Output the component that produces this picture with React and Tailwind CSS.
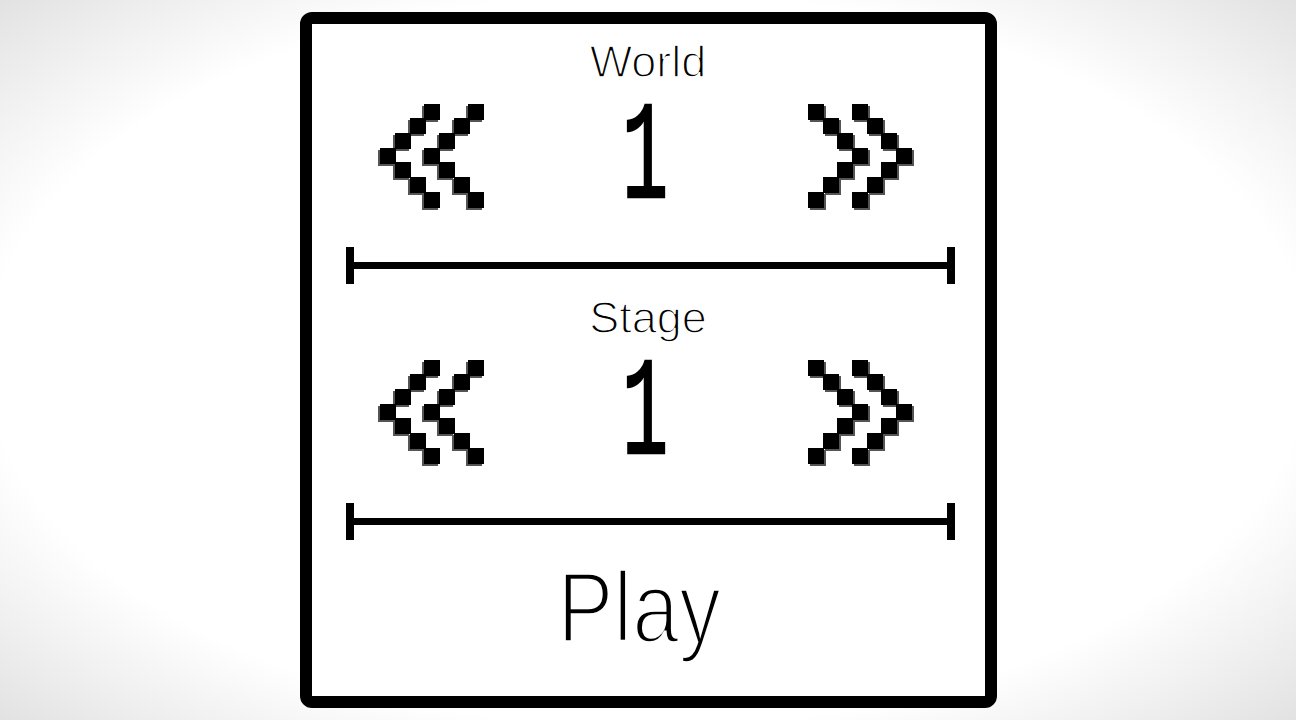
import React from "react";

const ROWS = [0, 1, 2, 3, 4, 5, 6];

const Chevrons = ({ dir }) => {
  const cells = [];
  ROWS.forEach((r) => {
    const d = Math.abs(r - 3);
    const cols = dir === "left" ? [d, d + 3] : [3 - d, 6 - d];
    for (let c = 0; c < 7; c++) {
      cells.push(
        <div key={`${r}-${c}`} className="w-[15px] h-[15px] relative">
          {cols.includes(c) && (
            <div
              className={
                dir === "left"
                  ? "absolute left-0 top-0 w-[16px] h-[16px] bg-black shadow-[-2px_2px_0_#555]"
                  : "absolute left-0 top-0 w-[16px] h-[16px] bg-black shadow-[2px_2px_0_#555]"
              }
            />
          )}
        </div>
      );
    }
  });
  return (
    <button className="grid grid-cols-[repeat(7,14.7px)] grid-rows-[repeat(7,14.7px)] shrink-0 cursor-pointer">
      {cells}
    </button>
  );
};

const Divider = () => (
  <div className="flex items-center w-[609px] h-[37px] ml-[4px]">
    <div className="w-[8px] h-[37px] bg-black" />
    <div className="flex-1 h-[7px] bg-black" />
    <div className="w-[8px] h-[37px] bg-black" />
  </div>
);

const Picker = ({ label, value, top }) => (
  <>
    <div
      className={`${top} h-[45px] leading-none text-[45px] text-black font-['Liberation_Sans',Arial,sans-serif] [-webkit-text-stroke:1.5px_white]`}
    >
      {label}
    </div>
    <div className="flex items-center h-[104px] mt-[19px] -ml-[5px]">
      <Chevrons dir="left" />
      <div className="w-[325px] flex justify-center items-center h-[104px] pt-[10px]">
        <span className="block text-[140px] leading-[94px] h-[94px] font-['Liberation_Mono',monospace] text-black [-webkit-text-stroke:2.5px_black] scale-x-[0.55]">
          {value}
        </span>
      </div>
      <Chevrons dir="right" />
    </div>
    <div className="mt-[40px]">
      <Divider />
    </div>
  </>
);

export default function App() {
  return (
    <div className="w-full h-screen flex items-center justify-center bg-[radial-gradient(ellipse_at_center,#ffffff_72%,#e2e2e2_100%)]">
      <div className="w-[697px] h-[696px] border-[12px] border-black rounded-[12px] bg-white flex flex-col items-center pt-[15px]">
        <Picker label="World" value="1" top="" />
        <Picker label="Stage" value="1" top="mt-[11px]" />
        <div className="mt-[17px] -ml-[18px] h-[100px] leading-none text-[100px] text-black font-['Liberation_Sans',Arial,sans-serif] [-webkit-text-stroke:3.5px_white] scale-x-[0.84]">
          Play
        </div>
      </div>
    </div>
  );
}
